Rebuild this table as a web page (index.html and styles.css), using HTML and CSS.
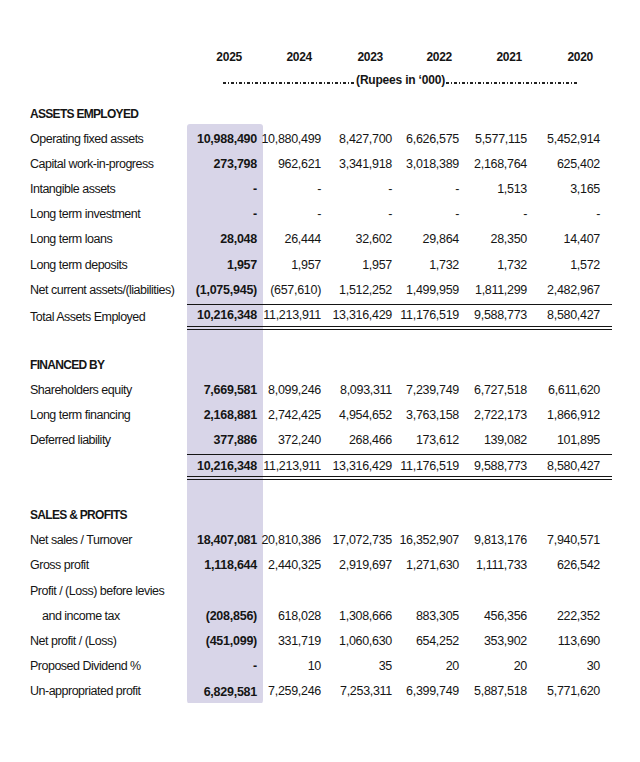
FILE: index.html
```html
<!DOCTYPE html>
<html lang="en">
<head>
<meta charset="utf-8">
<title>Six Year Summary</title>
<link rel="stylesheet" href="styles.css">
</head>
<body>
<div class="page">
  <div class="row head">
    <div></div>
    <div>2025</div><div>2024</div><div>2023</div><div>2022</div><div>2021</div><div>2020</div>
  </div>
  <div class="rupees">
    <span class="dash"></span><span class="rtxt">(Rupees in ‘000)</span><span class="dash"></span>
  </div>

  <div class="body">
    <div class="row sec"><div>ASSETS EMPLOYED</div><div class="bandtop"></div></div>
    <div class="row band"><div>Operating fixed assets</div><div>10,988,490</div><div>10,880,499</div><div>8,427,700</div><div>6,626,575</div><div>5,577,115</div><div>5,452,914</div></div>
    <div class="row band"><div>Capital work-in-progress</div><div>273,798</div><div>962,621</div><div>3,341,918</div><div>3,018,389</div><div>2,168,764</div><div>625,402</div></div>
    <div class="row band"><div>Intangible assets</div><div>-</div><div>-</div><div>-</div><div>-</div><div>1,513</div><div>3,165</div></div>
    <div class="row band"><div>Long term investment</div><div>-</div><div>-</div><div>-</div><div>-</div><div>-</div><div>-</div></div>
    <div class="row band"><div>Long term loans</div><div>28,048</div><div>26,444</div><div>32,602</div><div>29,864</div><div>28,350</div><div>14,407</div></div>
    <div class="row band"><div>Long term deposits</div><div>1,957</div><div>1,957</div><div>1,957</div><div>1,732</div><div>1,732</div><div>1,572</div></div>
    <div class="row band"><div>Net current assets/(liabilities)</div><div>(1,075,945)</div><div>(657,610)</div><div>1,512,252</div><div>1,499,959</div><div>1,811,299</div><div>2,482,967</div></div>
    <div class="row band tot"><div class="nolines">Total Assets Employed</div><div>10,216,348</div><div>11,213,911</div><div>13,316,429</div><div>11,176,519</div><div>9,588,773</div><div>8,580,427</div></div>
    <div class="row band gap"><div></div></div>

    <div class="row band sec"><div>FINANCED BY</div></div>
    <div class="row band"><div>Shareholders equity</div><div>7,669,581</div><div>8,099,246</div><div>8,093,311</div><div>7,239,749</div><div>6,727,518</div><div>6,611,620</div></div>
    <div class="row band"><div>Long term financing</div><div>2,168,881</div><div>2,742,425</div><div>4,954,652</div><div>3,763,158</div><div>2,722,173</div><div>1,866,912</div></div>
    <div class="row band"><div>Deferred liability</div><div>377,886</div><div>372,240</div><div>268,466</div><div>173,612</div><div>139,082</div><div>101,895</div></div>
    <div class="row band tot"><div class="nolines"></div><div>10,216,348</div><div>11,213,911</div><div>13,316,429</div><div>11,176,519</div><div>9,588,773</div><div>8,580,427</div></div>
    <div class="row band gap"><div></div></div>

    <div class="row band sec"><div>SALES &amp; PROFITS</div></div>
    <div class="row band"><div>Net sales / Turnover</div><div>18,407,081</div><div>20,810,386</div><div>17,072,735</div><div>16,352,907</div><div>9,813,176</div><div>7,940,571</div></div>
    <div class="row band"><div>Gross profit</div><div>1,118,644</div><div>2,440,325</div><div>2,919,697</div><div>1,271,630</div><div>1,111,733</div><div>626,542</div></div>
    <div class="row band"><div>Profit / (Loss) before levies</div></div>
    <div class="row band"><div class="indent">and income tax</div><div>(208,856)</div><div>618,028</div><div>1,308,666</div><div>883,305</div><div>456,356</div><div>222,352</div></div>
    <div class="row band"><div>Net profit / (Loss)</div><div>(451,099)</div><div>331,719</div><div>1,060,630</div><div>654,252</div><div>353,902</div><div>113,690</div></div>
    <div class="row band"><div>Proposed Dividend %</div><div>-</div><div>10</div><div>35</div><div>20</div><div>20</div><div>30</div></div>
    <div class="row last"><div>Un-appropriated profit</div><div class="bandend">6,829,581</div><div>7,259,246</div><div>7,253,311</div><div>6,399,749</div><div>5,887,518</div><div>5,771,620</div></div>
  </div>
</div>
</body>
</html>
```

FILE: styles.css
```css
* { box-sizing: border-box; }
html, body { margin: 0; padding: 0; background: #ffffff; }
body {
  font-family: "Liberation Sans", Arial, sans-serif;
  font-size: 12.5px;
  color: #151515;
  letter-spacing: -0.3px;
}
.page {
  padding: 44.5px 0 0 30px;
  width: 640px;
}
.row {
  display: grid;
  grid-template-columns: 157px 76px 65px 71px 67px 68px 78px;
  width: 582px;
  height: 25.09px;
}
.row > div {
  display: flex;
  align-items: center;
  justify-content: flex-end;
  white-space: nowrap;
  padding-right: 7px;
}
.row > div:first-child {
  justify-content: flex-start;
  padding-right: 0;
  letter-spacing: -0.5px;
}
.row > div:nth-child(2) { padding-right: 6px; font-weight: bold; letter-spacing: -0.25px; }
.row > div:nth-child(7) { padding-right: 12px; }

.band {
  background: linear-gradient(#d8d5e8, #d8d5e8) no-repeat 157px 0 / 76px 100%;
}
.head { height: 25px; font-weight: bold; font-size: 12px; }
.head > div:nth-child(2) { padding-right: 21px; }
.head > div:nth-child(3) { padding-right: 16px; }
.head > div:nth-child(4) { padding-right: 16px; }
.head > div:nth-child(5) { padding-right: 14px; }
.head > div:nth-child(6) { padding-right: 12px; }
.head > div:nth-child(7) { padding-right: 19px; }

.rupees {
  display: flex;
  align-items: center;
  height: 21px;
  margin: 0 34px 11px 193px;
  width: 355px;
}
.dash {
  flex: 1;
  height: 2px;
  margin-top: 5px;
  background: repeating-linear-gradient(90deg, #222 0 3.5px, transparent 3.5px 5px, #222 5px 6.5px, transparent 6.5px 8px);
}
.rtxt { font-weight: bold; font-size: 12px; letter-spacing: -0.2px; padding: 0 1px; }

.row.sec > div:first-child { font-weight: bold; font-size: 12px; letter-spacing: -0.7px; }
.bandtop {
  background: #d8d5e8;
  margin-top: 22.5px;
  border-radius: 6px 6px 0 0;
}
.bandend {
  background: #d8d5e8;
  margin-bottom: -2.5px;
  border-radius: 0 0 6px 6px;
}
.tot { height: 27.5px; padding-top: 1.5px; }
.tot > div {
  border-top: 1.5px solid #151515;
  border-bottom: 4.5px double #151515;
}
.tot > div.nolines { border: 0; }
.gap { height: 22.68px; }
.indent { padding-left: 12px; }
```
